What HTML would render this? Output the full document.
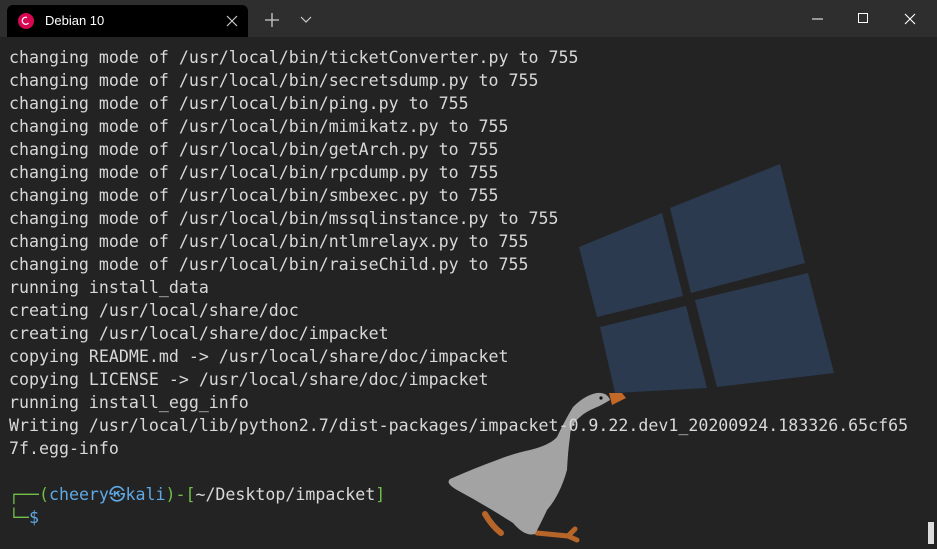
<!DOCTYPE html>
<html><head><meta charset="utf-8"><style>
body{margin:0;width:937px;height:549px;background:#232323;overflow:hidden;position:relative;font-family:"DejaVu Sans Mono","Liberation Mono",monospace}
.bar{position:absolute;left:0;top:0;width:937px;height:37px;background:#2e2e2e}
.tab{position:absolute;left:7px;top:5px;width:241px;height:32px;background:#000;border-radius:6px 6px 0 0}
.tab .t{position:absolute;left:38px;top:8px;color:#fff;font:13px "Liberation Sans",sans-serif}
pre{position:absolute;left:9px;top:46px;margin:0;font-size:16.6px;line-height:23px;color:#d8d8d8;font-family:"DejaVu Sans Mono",monospace}
.g{color:#6fbf4a}.b{color:#5ea9e6}
</style></head><body>
<div class="bar"><div class="tab">
<svg style="position:absolute;left:11px;top:8px" width="16" height="16"><circle cx="8" cy="8" r="8" fill="#d70751"/><path d="M9 4.5a3.5 3.5 0 1 0 1.5 5.5" stroke="#fff" stroke-width="1.3" fill="none"/></svg>
<span class="t">Debian 10</span>
<svg style="position:absolute;left:219px;top:10px" width="12" height="12"><path d="M1 1L11 11M11 1L1 11" stroke="#ccc" stroke-width="1.2"/></svg>
</div>
<svg style="position:absolute;left:265px;top:13px" width="14" height="14"><path d="M7 0V14M0 7H14" stroke="#ccc" stroke-width="1.3"/></svg>
<svg style="position:absolute;left:300px;top:16px" width="12" height="8"><path d="M1 1L6 6L11 1" stroke="#ccc" stroke-width="1.2" fill="none"/></svg>
<svg style="position:absolute;left:812px;top:18px" width="12" height="2"><path d="M0 1H11" stroke="#fff" stroke-width="1"/></svg>
<svg style="position:absolute;left:858px;top:13px" width="11" height="11"><rect x=".5" y=".5" width="9" height="9" stroke="#fff" fill="none"/></svg>
<svg style="position:absolute;left:904px;top:13px" width="12" height="12"><path d="M1 1L11 11M11 1L1 11" stroke="#fff" stroke-width="1.1"/></svg>
</div>
<svg style="position:absolute;left:0;top:0" width="937" height="549">
<g fill="#2b3a4f">
<polygon points="579,247 662,213 683,296 597,317"/>
<polygon points="670,208 780,164 805,263 691,293"/>
<polygon points="600,327 686,306 707,388 615,393"/>
<polygon points="695,300 808,273 834,373 717,387"/>
</g>
<path d="M485,514 Q492,526 501,533" stroke="#b8652a" stroke-width="6" fill="none" stroke-linecap="round"/>
<path d="M537,533 L568,536 L575,529 M568,536 L577,540" stroke="#b8652a" stroke-width="5" fill="none" stroke-linecap="round"/>
<path d="M597,393 Q607,392 610,400 Q600,406 597,407 Q585,412 580,417 Q570,425 570,437 Q568,450 567,470 Q560,495 547,510 Q540,525 535,534 Q525,537 513,523 Q485,505 457,490 Q445,483 450,479 Q475,468 497,460 Q515,453 530,450 Q550,445 557,437 Q565,420 573,407 Q585,395 597,393 Z" fill="#a3a3a3"/>
<path d="M609,393 L622,393 L626,398 L612,405 Z" fill="#c2692a"/>
<circle cx="601" cy="398" r="1.6" fill="#111"/>
</svg>
<pre>changing mode of /usr/local/bin/ticketConverter.py to 755
changing mode of /usr/local/bin/secretsdump.py to 755
changing mode of /usr/local/bin/ping.py to 755
changing mode of /usr/local/bin/mimikatz.py to 755
changing mode of /usr/local/bin/getArch.py to 755
changing mode of /usr/local/bin/rpcdump.py to 755
changing mode of /usr/local/bin/smbexec.py to 755
changing mode of /usr/local/bin/mssqlinstance.py to 755
changing mode of /usr/local/bin/ntlmrelayx.py to 755
changing mode of /usr/local/bin/raiseChild.py to 755
running install_data
creating /usr/local/share/doc
creating /usr/local/share/doc/impacket
copying README.md -&gt; /usr/local/share/doc/impacket
copying LICENSE -&gt; /usr/local/share/doc/impacket
running install_egg_info
Writing /usr/local/lib/python2.7/dist-packages/impacket-0.9.22.dev1_20200924.183326.65cf65
7f.egg-info

<span class="g">┌──(</span><span class="b">cheery㉿kali</span><span class="g">)-[</span>~/Desktop/impacket<span class="g">]</span>
<span class="g">└─</span><span class="b">$</span></pre>
<div style="position:absolute;left:928px;top:522px;width:6px;height:22px;background:#ddd"></div>
</body></html>
